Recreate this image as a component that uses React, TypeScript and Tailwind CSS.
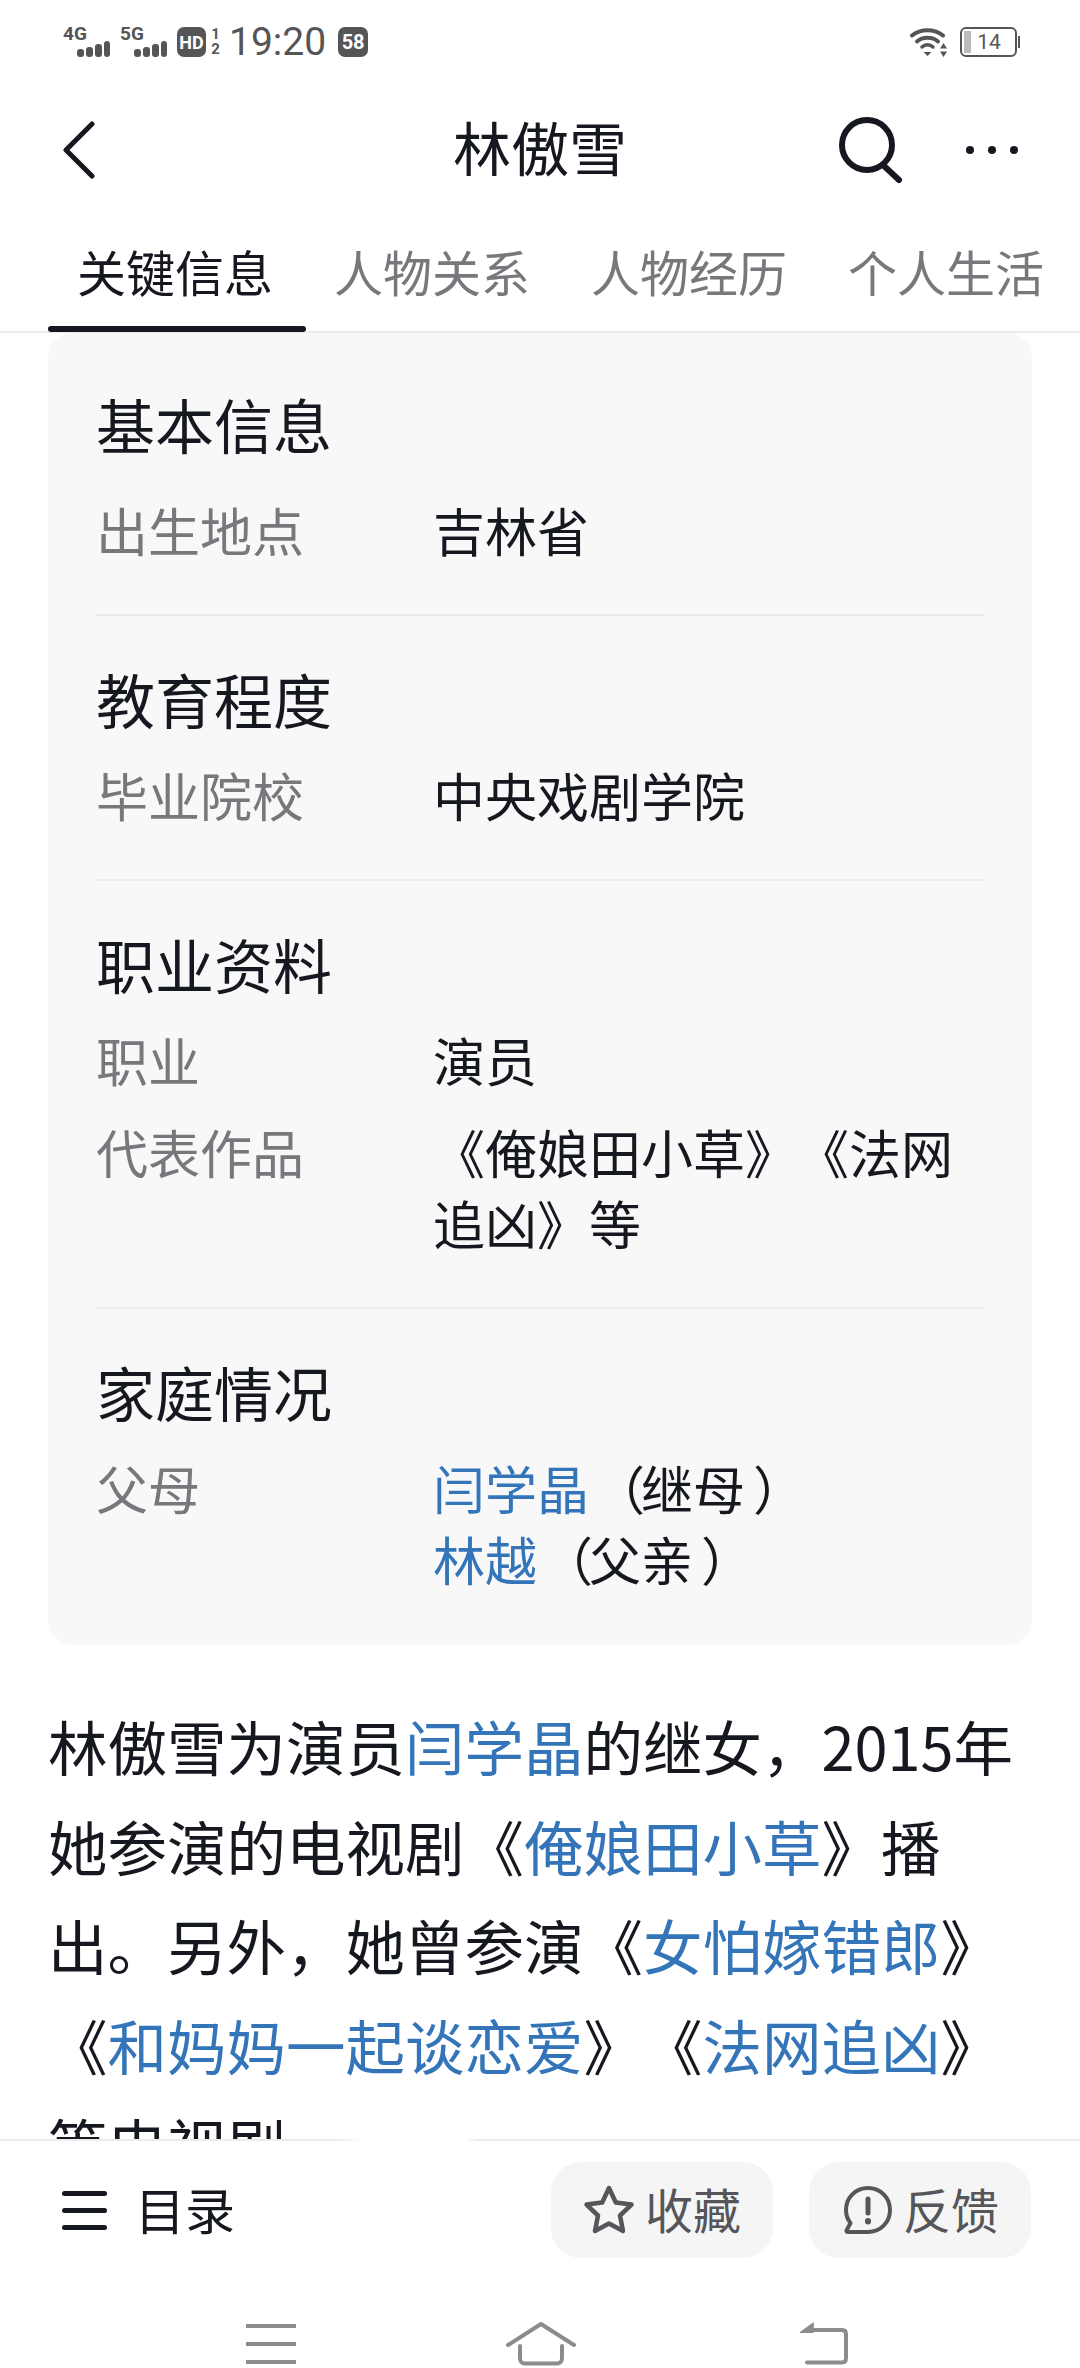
const cjk = "font-['Noto_Sans_CJK_SC','Noto_Sans',sans-serif]";

function Signal({ label }: { label: string }) {
  return (
    <div className="flex w-[47px] flex-col">
      <span className="h-[13px] font-['Roboto',sans-serif] text-[19px] leading-[13px] font-bold text-[#555558]">{label}</span>
      <div className="mt-[1px] flex items-end justify-end gap-[2px]">
        <span className="h-[8px] w-[7px] rounded-[3px] bg-[#555558]" />
        <span className="h-[10px] w-[7px] rounded-[3px] bg-[#555558]" />
        <span className="h-[13px] w-[7px] rounded-[3px] bg-[#555558]" />
        <span className="h-[16px] w-[6px] rounded-[3px] bg-[#555558]" />
      </div>
    </div>
  );
}

function StatusBar() {
  return (
    <div className="flex h-[84px] items-start justify-between pt-[27px] pr-[60px] pl-[63px] font-['Roboto',sans-serif] text-[#555558]">
      <div className="flex items-start">
        <Signal label="4G" />
        <div className="ml-[10px]">
          <Signal label="5G" />
        </div>
        <div className="ml-[10px] flex h-[30px] w-[29px] items-center justify-center rounded-[7px] bg-[#555558] text-[18px] font-bold text-white">HD</div>
        <div className="ml-[5px] flex w-[9px] flex-col items-center text-[15px] leading-[15px] font-bold">
          <span>1</span>
          <span>2</span>
        </div>
        <span className="ml-[9px] text-[39px] leading-[30px]">19:20</span>
        <div className="ml-[12px] flex h-[30px] w-[30px] items-center justify-center rounded-[7px] bg-[#555558] text-[20px] font-bold text-white">58</div>
      </div>
      <div className="flex items-start">
        <svg width="38" height="30" viewBox="0 0 38 30" fill="none" stroke="#555558" strokeLinecap="round">
          <path d="M2 8.5C10.5 1.5 24.5 1.5 33 8.5" strokeWidth="4" />
          <path d="M7 14.5C12.5 9.5 22.5 9.5 28 14.5" strokeWidth="4" />
          <path d="M12 20C15 17 20 17 23 20" strokeWidth="3.5" />
          <path d="M13.5 25H21.5L17.5 29Z" fill="#555558" stroke="none" />
          <path d="M30 21.5H37L33.5 16Z M30 24.5H37L33.5 30Z" fill="#555558" stroke="none" />
        </svg>
        <div className="ml-[12px] flex h-[30px] w-[57px] items-center rounded-[6px] border-2 border-[#555558] pl-[2px]">
          <span className="h-[22px] w-[7px] bg-[#bbbbbb]" />
          <span className="flex-1 pr-[8px] text-center text-[21px] leading-none">14</span>
        </div>
        <span className="mt-[9px] ml-[1px] h-[12px] w-[2px] bg-[#555558]" />
      </div>
    </div>
  );
}

function Header() {
  return (
    <div className="grid h-[132px] grid-cols-[1fr_auto_1fr] items-center text-[#16181f]">
      <div className="pl-[63px]">
        <svg width="32" height="58" viewBox="0 0 32 58" fill="none" stroke="#16181f" strokeWidth="5" strokeLinecap="round" strokeLinejoin="round">
          <path d="M29 3L3 29L29 55" />
        </svg>
      </div>
      <span className="pb-[8px] text-[58px] leading-none">林傲雪</span>
      <div className="flex items-center justify-end pr-[62px]">
        <svg width="64" height="66" viewBox="0 0 64 66" fill="none" stroke="#16181f" strokeWidth="6" strokeLinecap="round">
          <circle cx="28" cy="28" r="25" />
          <path d="M44 48L60 63" />
        </svg>
        <div className="ml-[63px] flex gap-[14px]">
          <span className="h-[8px] w-[8px] rounded-full bg-[#16181f]" />
          <span className="h-[8px] w-[8px] rounded-full bg-[#16181f]" />
          <span className="h-[8px] w-[8px] rounded-full bg-[#16181f]" />
        </div>
      </div>
    </div>
  );
}

function Tabs() {
  return (
    <div className="flex h-[117px] border-b-2 border-[#ebebec] pl-[48px] text-[49px] leading-[60px] whitespace-nowrap text-[#77787c]">
      <div className="flex flex-col pr-[33px] pl-[29px] text-[#16181f]">
        <span className="mt-[25px]">关键信息</span>
        <span className="mt-auto mb-[-1px] ml-[-29px] mr-[-33px] h-[6px] rounded-full bg-[#16181f]" />
      </div>
      <span className="mt-[25px] ml-[28px]">人物关系</span>
      <span className="mt-[25px] ml-[61px]">人物经历</span>
      <span className="mt-[25px] ml-[61px]">个人生活</span>
    </div>
  );
}

function Link({ children }: { children: React.ReactNode }) {
  return <span className="text-[#3375b8]">{children}</span>;
}

function InfoRow({ label, children, className = '' }: { label: string; children: React.ReactNode; className?: string }) {
  return (
    <div className={`flex text-[52px] leading-[71px] ${className}`}>
      <span className="w-[337px] shrink-0 text-[#77787c]">{label}</span>
      <div className="w-[550px] text-[#16181f]">{children}</div>
    </div>
  );
}

function Heading({ children }: { children: React.ReactNode }) {
  return <h2 className="text-[59px] leading-[84px] font-normal text-[#16181f]">{children}</h2>;
}

function InfoCard() {
  return (
    <div className="rounded-[24px] bg-[#f8f8f9] px-[48px] pt-[49px] pb-[51px]">
      <div className="border-b-2 border-[#ebebec] pb-[49px]">
        <Heading>基本信息</Heading>
        <InfoRow label="出生地点" className="mt-[28px]">吉林省</InfoRow>
      </div>
      <div className="border-b-2 border-[#ebebec] pt-[41px] pb-[49px]">
        <Heading>教育程度</Heading>
        <InfoRow label="毕业院校" className="mt-[18px]">中央戏剧学院</InfoRow>
      </div>
      <div className="border-b-2 border-[#ebebec] pt-[41px] pb-[49px]">
        <Heading>职业资料</Heading>
        <InfoRow label="职业" className="mt-[18px]">演员</InfoRow>
        <InfoRow label="代表作品" className="mt-[21px]">《俺娘田小草》《法网追凶》等</InfoRow>
      </div>
      <div className="pt-[41px]">
        <Heading>家庭情况</Heading>
        <InfoRow label="父母" className="mt-[18px]">
          <div>
            <Link>闫学晶</Link>
            <span className="mr-[-4px] ml-[4px]">（</span>继母<span className="mr-[-8px] ml-[8px]">）</span>
          </div>
          <div>
            <Link>林越</Link>
            <span className="mr-[-4px] ml-[4px]">（</span>父亲<span className="mr-[-8px] ml-[8px]">）</span>
          </div>
        </InfoRow>
      </div>
    </div>
  );
}

function BottomBar() {
  return (
    <div className="h-[229px] shrink-0 bg-white">
      <div className="h-[2px] bg-[linear-gradient(90deg,#ebebec_0,#ebebec_340px,#ffffff_360px,#ffffff_465px,#ebebec_480px)]" />
      <div className="mt-[21px] flex h-[96px] items-center pr-[49px] pl-[62px]">
        <div className="flex w-[45px] flex-col gap-[12px]">
          <span className="h-[5px] rounded-full bg-[#16181f]" />
          <span className="h-[5px] rounded-full bg-[#16181f]" />
          <span className="h-[5px] rounded-full bg-[#16181f]" />
        </div>
        <span className="ml-[28px] pb-[5px] text-[50px] leading-none text-[#16181f]">目录</span>
        <div className="ml-auto flex gap-[36px] text-[48px] leading-none text-[#55555a]">
          <div className="flex h-[96px] w-[222px] items-center gap-[10px] rounded-[30px] bg-[#f5f5f6] pl-[32px]">
            <svg width="52" height="50" viewBox="0 0 52 50" fill="none" stroke="#55555a" strokeWidth="4.5" strokeLinejoin="round">
              <path d="M26 3L32.8 17.5L48.5 19.6L37 30.5L40 46L26 38.4L12 46L15 30.5L3.5 19.6L19.2 17.5Z" />
            </svg>
            <span className="pb-[4px]">收藏</span>
          </div>
          <div className="flex h-[96px] w-[222px] items-center gap-[10px] rounded-[30px] bg-[#f5f5f6] pl-[32px]">
            <svg width="52" height="50" viewBox="0 0 52 50" fill="none" stroke="#55555a" strokeWidth="4" strokeLinejoin="round" strokeLinecap="round">
              <path d="M27 3C14.5 3 5 12.5 5 25C5 30 6.5 34.5 9.5 38L5.5 45.5C5.2 46.3 5.6 47 6.5 47H27C39.5 47 49 37.5 49 25C49 12.5 39.5 3 27 3Z" />
              <path d="M27 14V28" strokeWidth="5" />
              <path d="M27 36V36.5" strokeWidth="6" />
            </svg>
            <span className="pb-[4px]">反馈</span>
          </div>
        </div>
      </div>
      <div className="mt-[64px] flex items-start">
        <div className="ml-[246px] flex w-[50px] flex-col gap-[14px] pt-[2px]">
          <span className="h-[4px] bg-[#8c8c8c]" />
          <span className="h-[4px] bg-[#8c8c8c]" />
          <span className="h-[4px] bg-[#8c8c8c]" />
        </div>
        <svg className="ml-[210px]" width="70" height="44" viewBox="0 0 70 44" fill="none" stroke="#8c8c8c" strokeWidth="4" strokeLinecap="round" strokeLinejoin="round">
          <path d="M2 23L35 2L68 23" />
          <path d="M14 24V36C14 39.5 16 41.5 19 41.5H51C54 41.5 56 39.5 56 36V24" />
        </svg>
        <svg className="ml-[223px]" width="50" height="44" viewBox="0 0 50 44" fill="none" stroke="#8c8c8c" strokeWidth="4" strokeLinecap="round" strokeLinejoin="round">
          <path d="M10 8H43C46 8 47 9.5 47 12V36C47 39 46 40.5 43 40.5H8" />
          <path d="M14 1L1 10.5H14Z" fill="#8c8c8c" strokeWidth="1" />
        </svg>
      </div>
    </div>
  );
}

export default function App() {
  return (
    <div className={`flex h-[2368px] w-[1080px] flex-col overflow-hidden bg-white [text-spacing-trim:space-all] ${cjk}`}>
      <StatusBar />
      <Header />
      <Tabs />
      <main className="min-h-0 flex-1 overflow-hidden px-[48px]">
        <InfoCard />
        <p className="mt-[51px] text-[59.5px] leading-[99.6px] text-[#16181f]">
          林傲雪为演员<Link>闫学晶</Link>的继女，2015年她参演的电视剧《<Link>俺娘田小草</Link>》播出。另外，她曾参演《<Link>女怕嫁错郎</Link>》《<Link>和妈妈一起谈恋爱</Link>》《<Link>法网追凶</Link>》等电视剧。
        </p>
      </main>
      <BottomBar />
    </div>
  );
}
